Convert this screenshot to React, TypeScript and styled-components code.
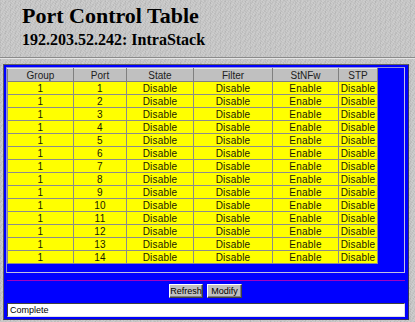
import React, { FC } from "react";
import styled, { createGlobalStyle } from "styled-components";

const GlobalStyle = createGlobalStyle`
  html, body {
    margin: 0;
    padding: 0;
    background: #c5c5c5;
  }
`;

interface PortRow {
  group: number;
  port: number;
  state: string;
  filter: string;
  stnfw: string;
  stp: string;
}

const rows: PortRow[] = Array.from({ length: 14 }, (_, i) => ({
  group: 1,
  port: i + 1,
  state: "Disable",
  filter: "Disable",
  stnfw: "Enable",
  stp: "Disable",
}));

const columns = [
  { label: "Group", width: 66 },
  { label: "Port", width: 53 },
  { label: "State", width: 67 },
  { label: "Filter", width: 79 },
  { label: "StNFw", width: 66 },
  { label: "STP", width: 39 },
];

const Page = styled.div`
  width: 415px;
  height: 322px;
  overflow: hidden;
  background-color: #c6c6c6;
  background-image: repeating-linear-gradient(
      37deg,
      rgba(255, 255, 255, 0.12) 0 1px,
      transparent 1px 2px
    ),
    repeating-linear-gradient(
      -61deg,
      rgba(0, 0, 0, 0.05) 0 1px,
      transparent 1px 3px
    ),
    repeating-linear-gradient(
      90deg,
      rgba(0, 0, 0, 0.04) 0 1px,
      transparent 1px 5px
    );
  box-sizing: border-box;
  padding-top: 4px;
`;

const Title = styled.h1`
  margin: 0 0 0 22px;
  font-family: "Liberation Serif", "Times New Roman", serif;
  font-weight: bold;
  font-size: 22px;
  line-height: 24px;
  color: #000;
`;

const Subtitle = styled.h2`
  margin: 2px 0 0 22px;
  font-family: "Liberation Serif", "Times New Roman", serif;
  font-weight: bold;
  font-size: 16px;
  line-height: 20px;
  color: #000;
`;

const Rule = styled.div`
  height: 1px;
  margin-top: 7px;
  background: #8a8a8a;
  border-bottom: 1px solid #e4e4e4;
`;

const Frame = styled.div`
  margin: 5px 0 0 3px;
  width: 406px;
  height: 256px;
  box-sizing: border-box;
  background: #0000ff;
  border-top: 1px solid #606060;
  border-left: 1px solid #606060;
  border-right: 1px solid #303060;
  border-bottom: 1px solid #303060;
  padding: 2px 3px 0 2px;
  display: flex;
  flex-direction: column;
`;

const TableBox = styled.div`
  height: 206px;
  box-sizing: border-box;
  border: 1px solid #9090d8;
  border-right-color: #c0c0e0;
  border-bottom-color: #c0c0e0;
`;

const Grid = styled.table`
  border-collapse: collapse;
  table-layout: fixed;
  font-family: "Liberation Sans", Arial, sans-serif;
  font-size: 10px;
`;

const HeadCell = styled.th<{ $w: number }>`
  width: ${(p) => p.$w}px;
  height: 13px;
  padding: 0;
  background: #c0c0c0;
  color: #202020;
  font-weight: normal;
  text-align: center;
  border: 1px solid #808080;
  border-top-color: #e8e8e8;
  box-sizing: border-box;
`;

const Cell = styled.td`
  height: 13px;
  padding: 0;
  background: #ffff00;
  color: #1a1a00;
  text-align: center;
  border: 1px solid #8c8c8c;
  box-sizing: border-box;
  line-height: 11px;
  letter-spacing: 0.2px;
`;

const Divider = styled.div`
  height: 1px;
  margin: 7px 0 0 1px;
  background: #a000c0;
`;

const ButtonRow = styled.div`
  display: flex;
  justify-content: center;
  gap: 4px;
  margin-top: 3px;
`;

const Button = styled.button<{ $w: number }>`
  width: ${(p) => p.$w}px;
  height: 14px;
  padding: 0;
  font-family: "Liberation Sans", Arial, sans-serif;
  font-size: 9px;
  white-space: nowrap;
  overflow: visible;
  color: #000;
  background: #c0c0c0;
  border: 1px solid;
  border-color: #ffffff #404040 #404040 #ffffff;
  box-shadow: inset -1px -1px 0 #808080;
`;

const Status = styled.div`
  margin: 5px 0 0 1px;
  height: 14px;
  box-sizing: border-box;
  background: #fff;
  border: 1px solid;
  border-color: #404040 #e0e0e0 #e0e0e0 #404040;
  font-family: "Liberation Sans", Arial, sans-serif;
  font-size: 9px;
  line-height: 12px;
  padding-left: 2px;
  color: #000;
`;

const App: FC = () => (
  <Page>
    <GlobalStyle />
    <Title>Port Control Table</Title>
    <Subtitle>192.203.52.242: IntraStack</Subtitle>
    <Rule />
    <Frame>
      <TableBox>
        <Grid>
          <thead>
            <tr>
              {columns.map((c) => (
                <HeadCell key={c.label} $w={c.width}>
                  {c.label}
                </HeadCell>
              ))}
            </tr>
          </thead>
          <tbody>
            {rows.map((r) => (
              <tr key={r.port}>
                <Cell>{r.group}</Cell>
                <Cell>{r.port}</Cell>
                <Cell>{r.state}</Cell>
                <Cell>{r.filter}</Cell>
                <Cell>{r.stnfw}</Cell>
                <Cell>{r.stp}</Cell>
              </tr>
            ))}
          </tbody>
        </Grid>
      </TableBox>
      <Divider />
      <ButtonRow>
        <Button $w={34}>Refresh</Button>
        <Button $w={35}>Modify</Button>
      </ButtonRow>
      <Status>Complete</Status>
    </Frame>
  </Page>
);

export default App;
